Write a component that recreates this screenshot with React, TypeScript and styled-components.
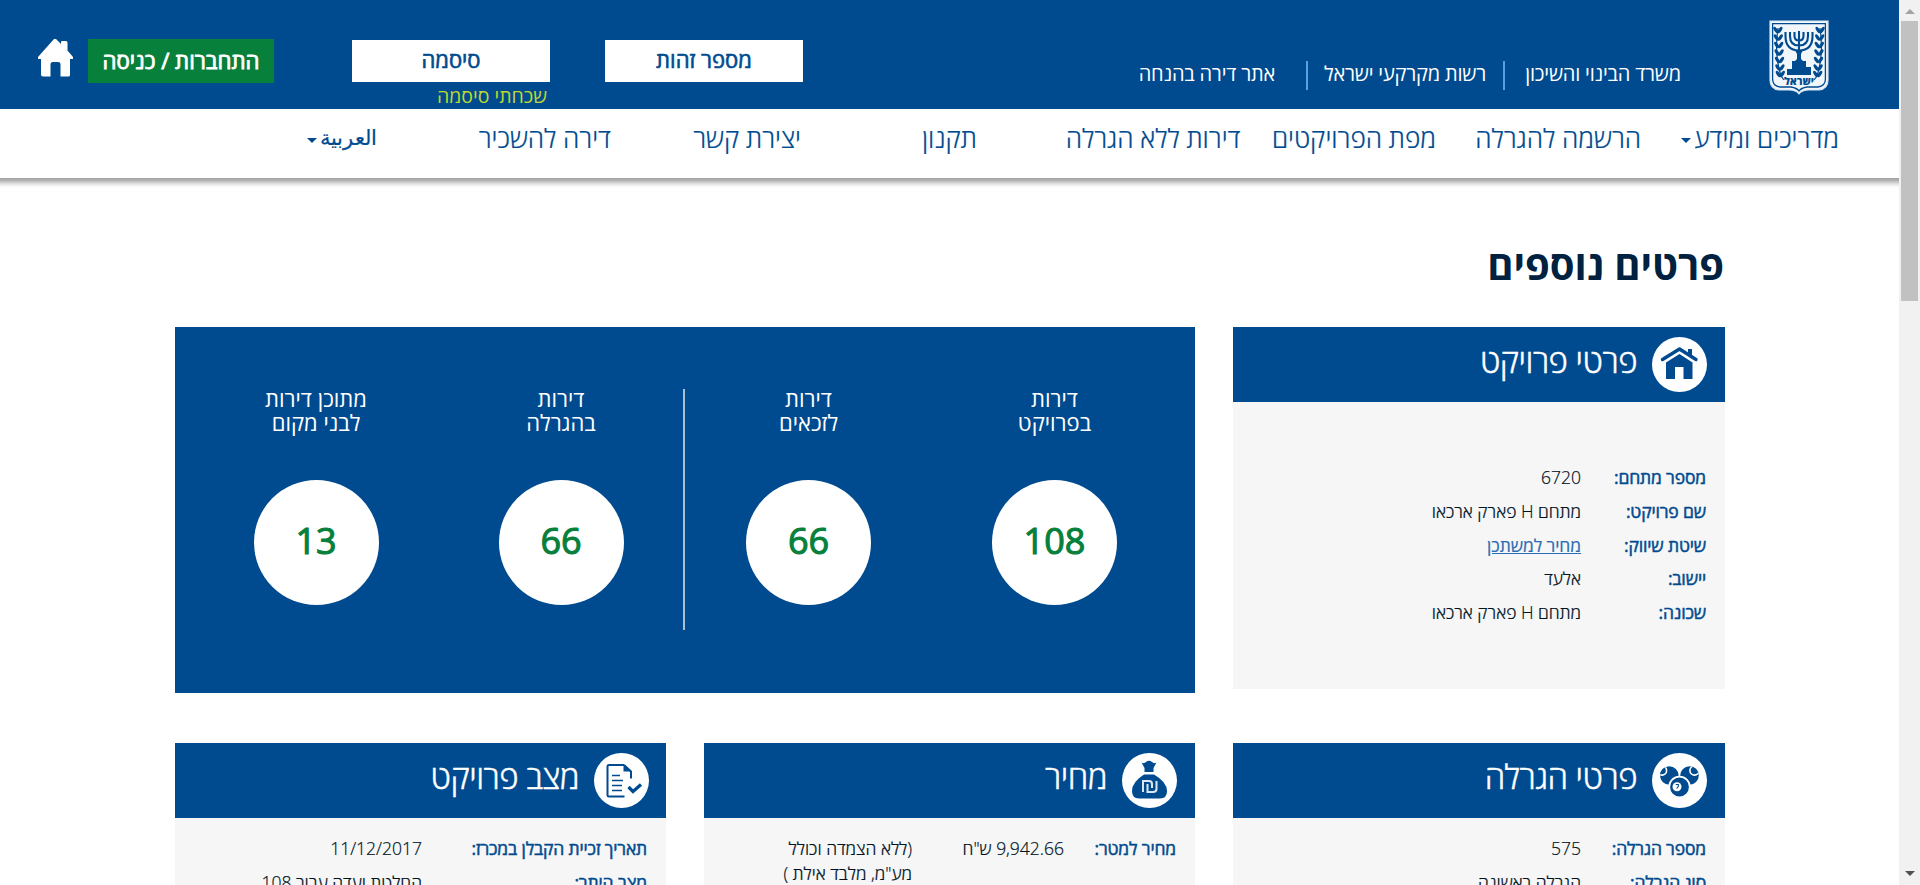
import React from "react";
import styled, { createGlobalStyle } from "styled-components";

const BLUE = "#004b8f";

const GlobalStyle = createGlobalStyle`
  * { box-sizing: border-box; }
  body { margin: 0; background: #fff; overflow: hidden; font-family: "Open Sans", "Noto Sans", "DejaVu Sans", sans-serif; }
`;

const Window = styled.div`
  display: flex;
  height: 885px;
  width: 1920px;
  overflow: hidden;
`;

const Page = styled.div`
  direction: rtl;
  width: 1899px;
  height: 885px;
  overflow: hidden;
  display: flex;
  flex-direction: column;
`;

const TopBar = styled.header`
  height: 109px;
  flex: none;
  background: ${BLUE};
  display: flex;
  align-items: flex-start;
  padding: 0 70px 0 38px;
`;

const EmblemSlot = styled.div`
  width: 60px;
  height: 76px;
  margin: 20px 0 0 88px;
  flex: none;
  svg { display: block; }
`;

const TopLink = styled.a<{ $w: number }>`
  width: ${(p) => p.$w}px;
  flex: none;
  margin-top: 59px;
  line-height: 30px;
  font-size: 20px;
  letter-spacing: -0.2px;
  color: #fff;
  white-space: nowrap;
`;

const TopDivider = styled.span<{ $after: number }>`
  width: 2px;
  height: 29px;
  flex: none;
  margin: 61px 0 0 ${(p) => p.$after}px;
  background: #5a9fe2;
`;

const Field = styled.div`
  width: 198px;
  height: 42px;
  background: #fff;
  color: ${BLUE};
  font-size: 22px;
  -webkit-text-stroke: 0.6px ${BLUE};
  line-height: 39px;
  text-align: center;
`;

const FieldGroup = styled.div<{ $after: number }>`
  margin: 40px 0 0 ${(p) => p.$after}px;
  width: 198px;
  flex: none;
`;

const Forgot = styled.a`
  display: block;
  color: #bfd730;
  font-size: 19.5px;
  line-height: 28px;
  padding-right: 3px;
`;

const LoginButton = styled.button`
  font-family: inherit;
  border: 0;
  padding: 0;
  margin: 39px 0 0 15px;
  width: 186px;
  height: 44px;
  flex: none;
  background: #07803b;
  color: #fff;
  font-size: 22.2px;
  -webkit-text-stroke: 0.8px #fff;
  line-height: 40px;
`;

const HomeSlot = styled.div`
  width: 35px;
  margin-top: 39px;
  svg { display: block; }
`;

const NavBar = styled.nav`
  height: 69px;
  flex: none;
  background: #fff;
  display: flex;
  padding: 8px 60px 0 0;
`;

const NavShadow = styled.div`
  height: 10px;
  flex: none;
  background: linear-gradient(#a0a0a0, #b4b4b4 25%, #dcdcdc 55%, #f6f6f6 80%, #fff);
`;

const NavItem = styled.a<{ $w: number }>`
  width: ${(p) => p.$w}px;
  flex: none;
  display: flex;
  align-items: center;
  height: 42px;
  font-size: 26.2px;
  font-weight: 300;
  -webkit-text-stroke: 0.2px ${BLUE};
  color: ${BLUE};
  white-space: nowrap;
`;

const ArabicLabel = styled.span`
  font-family: "DejaVu Sans", sans-serif;
  font-size: 20.5px;
  line-height: 30px;
`;

const Caret = styled.span`
  border: 5px solid transparent;
  border-top-color: ${BLUE};
  border-bottom: 0;
  margin: 5px 3px 0 0;
`;

const Content = styled.main`
  padding: 55px 174px 0 175px;
`;

const Title = styled.h1`
  margin: 0;
  height: 84px;
  line-height: 44px;
  font-size: 40px;
  font-weight: 700;
  color: #00213f;
  padding-right: 1px;
`;

const TopRow = styled.div`
  display: flex;
  justify-content: space-between;
  align-items: flex-start;
`;

const Cards = styled.div`
  display: flex;
  justify-content: space-between;
  margin-top: 50px;
`;

const Card = styled.section<{ $w: number; $h: number }>`
  width: ${(p) => p.$w}px;
  height: ${(p) => p.$h}px;
  background: #f6f6f6;
`;

const CardHead = styled.header<{ $inset?: number }>`
  height: 75px;
  background: ${BLUE};
  display: flex;
  align-items: center;
  padding-right: ${(p) => p.$inset ?? 18}px;
  gap: 15px;
  svg { flex: none; }
`;

const CardTitle = styled.h2`
  margin: -8px 0 0;
  font-size: 33px;
  font-weight: 300;
  -webkit-text-stroke: 0.4px #fff;
  letter-spacing: -0.5px;
  line-height: 46px;
  color: #fff;
  white-space: nowrap;
`;

const Rows = styled.dl<{ $top: number }>`
  margin: 0;
  padding: ${(p) => p.$top}px 19px 0 0;
`;

const Row = styled.div<{ $label: number }>`
  display: grid;
  grid-template-columns: ${(p) => p.$label}px auto 1fr;
  min-height: 33.8px;
  line-height: 25px;
  font-size: 17.5px;
  white-space: nowrap;
`;

const Label = styled.dt`
  color: ${BLUE};
  letter-spacing: -0.15px;
  -webkit-text-stroke: 0.5px ${BLUE};
`;

const Value = styled.dd<{ $w?: number }>`
  margin: 0;
  width: ${(p) => (p.$w ? `${p.$w}px` : "auto")};
  font-weight: 300;
  -webkit-text-stroke: 0.2px #00131f;
  color: #00131f;
  white-space: pre-line;
`;

const ValueLink = styled.a`
  color: #2a6db3;
  font-weight: 400;
  letter-spacing: -0.1px;
  -webkit-text-stroke: 0.2px #2a6db3;
  text-decoration: underline;
`;

const Stats = styled.section`
  width: 1020px;
  height: 366px;
  background: ${BLUE};
  display: flex;
  padding: 57px 17.5px 0 18px;
`;

const Stat = styled.div<{ $w: number }>`
  width: ${(p) => p.$w}px;
  flex: none;
  display: flex;
  flex-direction: column;
  align-items: center;
`;

const StatLabel = styled.div`
  margin-top: 2px;
  height: 94px;
  text-align: center;
  white-space: pre-line;
  color: #fff;
  font-size: 22px;
  line-height: 24px;
`;

const StatCircle = styled.div`
  width: 125px;
  height: 125px;
  border-radius: 50%;
  background: #fff;
  color: #07803b;
  font-size: 36px;
  -webkit-text-stroke: 1.1px #07803b;
  line-height: 122px;
  text-align: center;
`;

const StatDivider = styled.span`
  width: 2px;
  height: 241px;
  margin: 5px 1px 0 -1px;
  flex: none;
  background: #a9bfd6;
`;

const Scrollbar = styled.aside`
  width: 21px;
  height: 885px;
  background: #f1f1f1;
  display: flex;
  flex-direction: column;
  align-items: center;
`;

const ScrollArrow = styled.span<{ $down?: boolean }>`
  border: 5px solid transparent;
  ${(p) => (p.$down ? "border-top-color: #505050; border-bottom: 0; margin: auto 0 9px;" : "border-bottom-color: #a3a3a3; border-top: 0; margin: 9px 0 7px;")}
`;

const Thumb = styled.span`
  width: 17px;
  height: 280px;
  background: #c1c1c1;
`;

const branchLeaves = [10, 17.5, 25, 32.5, 40, 47.5, 54];

const Emblem = () => (
  <svg width="60" height="76" viewBox="0 0 60 76" fill="none">
    <path d="M1 1H59V60Q59 69 50 70H40Q33 70 30 74Q27 70 20 70H10Q1 69 1 60Z" fill="#f1f6fb" stroke="#d5e4f2" strokeWidth="1.2" />
    <path d="M3.6 3.6H56.4V59Q56.4 66 49 67H38Q32 68 30 71Q28 68 22 67H11Q3.6 66 3.6 59Z" stroke={BLUE} strokeWidth="1.3" />
    <g stroke={BLUE} strokeWidth="2.1">
      <path d="M30 11V36M25.500 12V16Q25.500 20.500 30 20.500Q34.500 20.500 34.500 16V12M21 12V16Q21 25.500 30 25.500Q39 25.500 39 16V12M16.500 12V16Q16.500 30.500 30 30.500Q43.500 30.500 43.500 16V12" />
    </g>
    <path d="M26 30H34L32 34V39L35 42H25L28 39V34ZM23 41H37V47H42V55H18V49H23Z" fill={BLUE} />
    <path d="M9 8Q5 34 12 56L15 60M51 8Q55 34 48 56L45 60" stroke={BLUE} strokeWidth="1.2" />
    {branchLeaves.map((y, i) => (
      <g key={y} fill={BLUE}>
        <ellipse cx={6.8 + i * 0.4} cy={y} rx="1.6" ry="3.6" transform={`rotate(-35 ${6.8 + i * 0.4} ${y})`} />
        <ellipse cx={11 + i * 0.4} cy={y} rx="1.6" ry="3.6" transform={`rotate(35 ${11 + i * 0.4} ${y})`} />
        <ellipse cx={53.2 - i * 0.4} cy={y} rx="1.6" ry="3.6" transform={`rotate(35 ${53.2 - i * 0.4} ${y})`} />
        <ellipse cx={49 - i * 0.4} cy={y} rx="1.6" ry="3.6" transform={`rotate(-35 ${49 - i * 0.4} ${y})`} />
      </g>
    ))}
    <text x="30" y="64.500" textAnchor="middle" fontSize="10.500" fontWeight="800" fontFamily="Open Sans" fill={BLUE}>ישראל</text>
  </svg>
);

const HomeIcon = () => (
  <svg width="35" height="38" viewBox="0 0 35 38">
    <path d="M16 0H18L23 5V3Q23 2 24 2H28Q29.500 2 29.500 4V11.500L35 18V20H32V36Q32 37.500 30.500 37.500H22.500V25Q22.500 23 20 23H15Q12.500 23 12.500 25V37.500H5Q3 37.500 3 35.500V20H0V18Z" fill="#fff" />
  </svg>
);

const ProjectIcon = () => (
  <svg width="55" height="55" viewBox="0 0 55 55">
    <circle cx="27.500" cy="27.500" r="27.500" fill="#fff" />
    <path d="M10.500 22.500L27.500 12L44 22.500" fill="none" stroke={BLUE} strokeWidth="3.400" strokeLinecap="round" strokeLinejoin="round" />
    <path d="M36 12H40V20L36 17.500ZM14 25.500L27.500 17L40.500 25.500V42H31.500V30H23V42H14Z" fill={BLUE} />
  </svg>
);

const LotteryIcon = () => (
  <svg width="55" height="55" viewBox="0 0 55 55">
    <defs>
      <clipPath id="ballLeft"><circle cx="17.300" cy="22.500" r="9.300" /></clipPath>
      <clipPath id="ballRight"><circle cx="37.500" cy="22.500" r="9.300" /></clipPath>
    </defs>
    <circle cx="27.500" cy="27.500" r="27.500" fill="#fff" />
    <circle cx="17.300" cy="22.500" r="9.300" fill={BLUE} />
    <circle cx="37.500" cy="22.500" r="9.300" fill={BLUE} />
    <circle cx="10" cy="17.500" r="4.600" fill={BLUE} stroke="#fff" strokeWidth="1.600" clipPath="url(#ballLeft)" />
    <circle cx="42.500" cy="17.500" r="4.600" fill={BLUE} stroke="#fff" strokeWidth="1.600" clipPath="url(#ballRight)" />
    <circle cx="27.500" cy="34" r="10.300" fill={BLUE} stroke="#fff" strokeWidth="1.800" />
    <circle cx="25" cy="33.700" r="4.500" fill="#fff" />
    <path d="M23.700 31.500H26.300V33.500L24.600 35.500" fill="none" stroke={BLUE} strokeWidth="1.100" />
  </svg>
);

const PriceIcon = () => (
  <svg width="55" height="55" viewBox="0 0 55 55">
    <circle cx="27.500" cy="27.500" r="27.500" fill="#fff" />
    <path d="M19.500 9.500Q22 11 24 9Q27 6.500 30 9Q32 11 34.500 9.500L31.500 15V19H22.500V15Z" fill={BLUE} />
    <path d="M22 21.500H32Q45 29 45 38Q45 45.500 38 45.500H17Q10 45.500 10 38Q10 29 22 21.500Z" fill={BLUE} />
    <path d="M21 39V28H27Q30 28 30 31V35M25.500 31V39H31Q34.500 39 34.500 36V28" fill="none" stroke="#dbe7f2" strokeWidth="2" />
  </svg>
);

const StatusIcon = () => (
  <svg width="55" height="55" viewBox="0 0 55 55">
    <circle cx="27.500" cy="27.500" r="27.500" fill="#fff" />
    <path d="M30 12H15Q13.500 12 13.500 13.500V42Q13.500 43.500 15 43.500H30.500M30 12L37 18.500V25.500" fill="none" stroke={BLUE} strokeWidth="2" />
    <path d="M29.500 11V18.500H37.500Z" fill={BLUE} />
    <path d="M18 22.500H26M18 27.500H29M18 32.500H28M18 37.500H28" stroke={BLUE} strokeWidth="1.700" />
    <path d="M34.500 34L39 38.500L47 31.500" fill="none" stroke={BLUE} strokeWidth="3.200" />
  </svg>
);

const navItems = [
  { text: "מדריכים ומידע", w: 198, caret: true },
  { text: "הרשמה להגרלה", w: 205 },
  { text: "מפת הפרויקטים", w: 195.5 },
  { text: "דירות ללא הגרלה", w: 263.5 },
  { text: "תקנון", w: 176 },
  { text: "יצירת קשר", w: 190 },
  { text: "דירה להשכיר", w: 234 },
];

const StatItem = ({ w, label, value }: { w: number; label: string; value: string }) => (
  <Stat $w={w}>
    <StatLabel>{label}</StatLabel>
    <StatCircle>{value}</StatCircle>
  </Stat>
);

const App = () => (
  <Window>
    <GlobalStyle />
    <Page>
      <TopBar>
        <EmblemSlot><Emblem /></EmblemSlot>
        <TopLink $w={176}>משרד הבינוי והשיכון</TopLink>
        <TopDivider $after={17} />
        <TopLink $w={178}>רשות מקרקעי ישראל</TopLink>
        <TopDivider $after={31} />
        <TopLink $w={472}>אתר דירה בהנחה</TopLink>
        <FieldGroup $after={55}><Field>מספר זהות</Field></FieldGroup>
        <FieldGroup $after={78}>
          <Field>סיסמה</Field>
          <Forgot>שכחתי סיסמה</Forgot>
        </FieldGroup>
        <LoginButton>התחברות / כניסה</LoginButton>
        <HomeSlot><HomeIcon /></HomeSlot>
      </TopBar>
      <NavBar>
        {navItems.map((n) => (
          <NavItem key={n.text} $w={n.w}>
            {n.text}
            {n.caret && <Caret />}
          </NavItem>
        ))}
        <NavItem $w={80}><ArabicLabel>العربية</ArabicLabel><Caret /></NavItem>
      </NavBar>
      <NavShadow />
      <Content>
        <Title>פרטים נוספים</Title>
        <TopRow>
          <Card $w={492} $h={362}>
            <CardHead><ProjectIcon /><CardTitle>פרטי פרויקט</CardTitle></CardHead>
            <Rows $top={63}>
              <Row $label={125}><Label>מספר מתחם:</Label><Value>6720</Value></Row>
              <Row $label={125}><Label>שם פרויקט:</Label><Value>מתחם H פארק ארכאו</Value></Row>
              <Row $label={125}><Label>שיטת שיווק:</Label><Value><ValueLink>מחיר למשתכן</ValueLink></Value></Row>
              <Row $label={125}><Label>יישוב:</Label><Value>אלעד</Value></Row>
              <Row $label={125}><Label>שכונה:</Label><Value>מתחם H פארק ארכאו</Value></Row>
            </Rows>
          </Card>
          <Stats>
            <StatItem w={246} label={"דירות\nבפרויקט"} value="108" />
            <StatItem w={246} label={"דירות\nלזכאים"} value="66" />
            <StatDivider />
            <StatItem w={245} label={"דירות\nבהגרלה"} value="66" />
            <StatItem w={245} label={"מתוכן דירות\nלבני מקום"} value="13" />
          </Stats>
        </TopRow>
        <Cards>
          <Card $w={492} $h={300}>
            <CardHead><LotteryIcon /><CardTitle>פרטי הגרלה</CardTitle></CardHead>
            <Rows $top={18}>
              <Row $label={125}><Label>מספר הגרלה:</Label><Value>575</Value></Row>
              <Row $label={125}><Label>סוג הגרלה:</Label><Value>הגרלה ראשונה</Value></Row>
            </Rows>
          </Card>
          <Card $w={491} $h={300}>
            <CardHead $inset={18}><PriceIcon /><CardTitle>מחיר</CardTitle></CardHead>
            <Rows $top={18}>
              <Row $label={112}><Label>מחיר למטר:</Label><Value $w={152}>9,942.66 ש"ח</Value><Value>{'(ללא הצמדה וכולל\nמע"מ, מלבד אילת )'}</Value></Row>
            </Rows>
          </Card>
          <Card $w={491} $h={300}>
            <CardHead $inset={17}><StatusIcon /><CardTitle>מצב פרויקט</CardTitle></CardHead>
            <Rows $top={18}>
              <Row $label={225}><Label>תאריך זכיית הקבלן במכרז:</Label><Value>11/12/2017</Value></Row>
              <Row $label={225}><Label>מצב היתר:</Label><Value>החלטת ועדה עבור 108</Value></Row>
            </Rows>
          </Card>
        </Cards>
      </Content>
    </Page>
    <Scrollbar>
      <ScrollArrow />
      <Thumb />
      <ScrollArrow $down />
    </Scrollbar>
  </Window>
);

export default App;
